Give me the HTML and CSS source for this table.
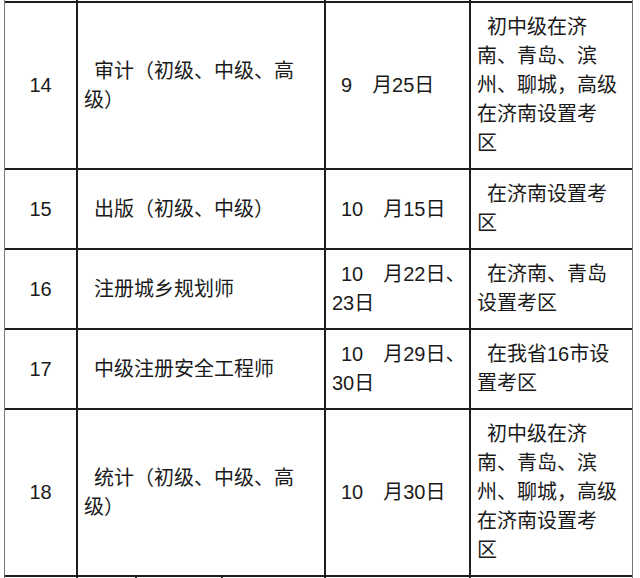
FILE: index.html
```html
<!DOCTYPE html>
<html lang="zh-CN">
<head>
<meta charset="utf-8">
<title>考试安排</title>
<link rel="stylesheet" href="styles.css">
</head>
<body>
<div class="sheet">
  <div class="cell stub first"></div>
  <div class="cell stub name"></div>
  <div class="cell stub"></div>
  <div class="cell stub"></div>

  <div class="cell first num">14</div>
  <div class="cell name"><p class="txt">审计（初级、中级、高<br>级）</p></div>
  <div class="cell"><p class="txt date">9<span class="gap"></span>月25日</p></div>
  <div class="cell"><p class="txt">初中级在济<br>南、青岛、滨<br>州、聊城，高级<br>在济南设置考<br>区</p></div>

  <div class="cell first num">15</div>
  <div class="cell name"><p class="txt">出版（初级、中级）</p></div>
  <div class="cell"><p class="txt date">10<span class="gap"></span>月15日</p></div>
  <div class="cell"><p class="txt">在济南设置考<br>区</p></div>

  <div class="cell first num">16</div>
  <div class="cell name"><p class="txt">注册城乡规划师</p></div>
  <div class="cell"><p class="txt date">10<span class="gap"></span>月22日、<br>23日</p></div>
  <div class="cell"><p class="txt">在济南、青岛<br>设置考区</p></div>

  <div class="cell first num">17</div>
  <div class="cell name"><p class="txt">中级注册安全工程师</p></div>
  <div class="cell"><p class="txt date">10<span class="gap"></span>月29日、<br>30日</p></div>
  <div class="cell"><p class="txt">在我省16市设<br>置考区</p></div>

  <div class="cell first num">18</div>
  <div class="cell name"><p class="txt">统计（初级、中级、高<br>级）</p></div>
  <div class="cell"><p class="txt date">10<span class="gap"></span>月30日</p></div>
  <div class="cell"><p class="txt">初中级在济<br>南、青岛、滨<br>州、聊城，高级<br>在济南设置考<br>区</p></div>

  <div class="cell first tail"></div>
  <div class="cell tail"></div>
  <div class="cell tail"></div>
  <div class="cell tail"></div>
  <div class="cell tail"></div>
  <div class="cell tail"></div>
</div>
</body>
</html>
```
FILE: styles.css
```css
html, body {
  margin: 0;
  padding: 0;
  background: #ffffff;
  overflow: hidden;
}

body {
  font-family: "Liberation Sans", "Noto Sans CJK SC", sans-serif;
  font-size: 20px;
  color: #1a1a1a;
}

.sheet {
  display: grid;
  grid-template-columns: 71px 59px 86px 103px 145px 163px;
  grid-template-rows: 1px 167px 80px 80px 80px 167px 3px;
  width: 629px;
  box-sizing: border-box;
  margin-left: 4px;
  border-left: 1px solid #777;
  border-right: 1px solid #777;
}

.cell {
  box-sizing: border-box;
  border-top: 2px solid #1e1e1e;
  border-left: 2px solid #1e1e1e;
  display: flex;
  align-items: center;
  padding: 0 6px;
  min-width: 0;
  overflow: hidden;
}

.cell.first {
  border-left: none;
}

.cell.name {
  grid-column: span 3;
}

.cell.stub {
  border-top: none;
}

.cell.tail {
  padding: 0;
}

.num {
  justify-content: center;
  padding: 0;
}

.txt {
  margin: 0;
  line-height: 29px;
  white-space: nowrap;
  text-indent: 10px;
}

.date {
  text-indent: 9px;
}

.gap {
  display: inline-block;
  width: 20px;
}
```
